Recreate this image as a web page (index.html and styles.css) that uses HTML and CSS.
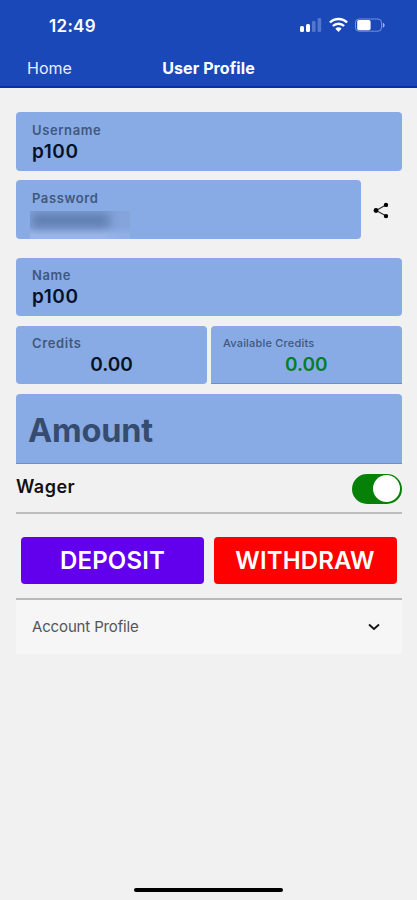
FILE: index.html
```
<!DOCTYPE html>
<html lang="en">
<head>
<meta charset="utf-8">
<title>User Profile</title>
<link rel="stylesheet" href="styles.css">
</head>
<body>
<div class="screen">
  <header class="header">
    <div class="status">
      <span class="clock">12:49</span>
      <svg class="status-icons" width="88" height="18" viewBox="0 0 88 18" fill="#fff">
        <rect x="0" y="10" width="4" height="6" rx="1.5"/>
        <rect x="6" y="8" width="4" height="8" rx="1.5"/>
        <rect x="12" y="5" width="3.6" height="11" rx="1.3" opacity=".25"/>
        <rect x="17.6" y="2" width="3.6" height="14" rx="1.3" opacity=".25"/>
        <g fill="none" stroke="#fff" stroke-width="2.4">
          <path d="M29.9 6.5a12.2 12.2 0 0 1 17.2 0"/>
          <path d="M32.9 10a8 8 0 0 1 11.2 0"/>
        </g>
        <path d="M35.4 12.7a4.5 4.5 0 0 1 6.2 0L38.5 15.9z"/>
        <rect x="55.5" y="3" width="26" height="12.2" rx="3.5" fill="none" stroke="#fff" stroke-opacity=".4"/>
        <rect x="57.2" y="4" width="13.4" height="10.2" rx="1.8"/>
        <path d="M82.8 6.7c2.4 1 2.4 4 0 5z" opacity=".6"/>
      </svg>
    </div>
    <nav class="nav">
      <a class="home">Home</a>
      <h1 class="title">User Profile</h1>
    </nav>
  </header>

  <main class="content">
    <div class="field">
      <label class="label">Username</label>
      <span class="value">p100</span>
    </div>
    <div class="row password-row">
      <div class="field">
        <label class="label">Password</label>
        <div class="masked"><i class="smudge"></i></div>
      </div>
      <svg class="share" width="18" height="20" viewBox="0 0 18 20">
        <path d="M14.2 4.7L4.2 10.5l10 5.6" fill="none" stroke="#333" stroke-width="1.2"/>
        <circle cx="14" cy="4.9" r="2.2"/><circle cx="4" cy="10.5" r="2.4"/><circle cx="14" cy="16.1" r="2.2"/>
      </svg>
    </div>
    <div class="field name-field">
      <label class="label">Name</label>
      <span class="value">p100</span>
    </div>
    <div class="row">
      <div class="field half">
        <label class="label">Credits</label>
        <span class="value number">0.00</span>
      </div>
      <div class="field half available">
        <label class="label">Available Credits</label>
        <span class="value number">0.00</span>
      </div>
    </div>
    <div class="amount">Amount</div>
    <div class="wager">
      <span class="wager-label">Wager</span>
      <span class="toggle"><i class="knob"></i></span>
    </div>
    <div class="actions">
      <button class="button deposit">DEPOSIT</button>
      <button class="button withdraw">WITHDRAW</button>
    </div>
    <div class="panel">
      <span class="panel-title">Account Profile</span>
      <svg width="14" height="10" viewBox="0 0 14 10"><path d="M2 2.5L7 7l5-4.5" fill="none" stroke="#111" stroke-width="1.8"/></svg>
    </div>
  </main>
  <div class="home-indicator"></div>
</div>
</body>
</html>
```
FILE: styles.css
```
* { box-sizing: border-box; }
body { margin: 0; font-family: Inter, "Liberation Sans", sans-serif; background: #f1f1f1; }
.screen { width: 417px; height: 900px; display: flex; flex-direction: column; background: #f1f1f1; overflow: hidden; }
.header { height: 88px; background: #1b48b9; border-bottom: 2px solid #0731ae; color: #fff; flex: none; }
.status { height: 50px; padding: 16px 29px 0 49px; display: flex; justify-content: space-between; align-items: flex-start; }
.clock { font-size: 17px; line-height: 20px; font-weight: 600; letter-spacing: .3px; }
.status-icons { display: block; }
.nav { height: 36px; display: grid; grid-template-columns: 1fr auto 1fr; align-items: center; padding: 0 27px; }
.home { font-size: 16px; line-height: 20px; color: #e9edff; }
.title { margin: 0; font-size: 16px; line-height: 20px; font-weight: 700; letter-spacing: .1px; }
.content { flex: 1; padding: 24.4px 15.5px 0 16px; }
.field { height: 58.5px; border-radius: 4px; background: #89abe5; padding: 9.5px 16px 0; display: flex; flex-direction: column; }
.label { font-size: 13px; line-height: 17px; font-weight: 600; color: #3f587f; letter-spacing: .6px; }
.value { font-size: 19px; line-height: 26px; font-weight: 600; color: #071126; letter-spacing: .55px; }
.number { text-align: center; letter-spacing: 0; }
.row { display: flex; gap: 4px; margin-top: 9.5px; }
.password-row { align-items: center; gap: 11px; }
.password-row .field { width: 345px; }
.share { display: block; }
.masked { width: 100px; height: 28px; margin: 4px 0 0 -2px; background: linear-gradient(to bottom, #7f9dd2 0, #7f9dd2 55%, #98b6ec 85%); overflow: hidden; -webkit-mask-image: linear-gradient(to right, #000 70%, rgba(0,0,0,.5) 90%); }
.smudge { display: block; width: 78px; height: 13px; margin: 3px 0 0 3px; background: #5f7eb1; filter: blur(4px); }
.name-field { margin-top: 19px; }
.half { flex: none; width: 191px; }
.available { width: 190.5px; height: 58px; border-bottom: 1.5px solid #6f8dc6; border-radius: 4px 4px 0 0; padding-left: 12px; padding-right: 12px; }
.available .label { font-size: 11px; font-weight: 500; letter-spacing: .2px; }
.available .number { color: #087d27; }
.amount { margin-top: 9.5px; height: 70.5px; border-radius: 4px 4px 0 0; border-bottom: 1.5px solid #718fc8; background: #89abe5; padding: 4px 12px 0; font-size: 32.5px; line-height: 66px; font-weight: 700; letter-spacing: -.2px; color: #354b70; }
.wager { height: 49.5px; border-bottom: 2px solid #bdbdbd; display: flex; justify-content: space-between; padding-top: 9.5px; }
.wager-label { font-size: 18px; line-height: 25px; font-weight: 600; color: #111; letter-spacing: .5px; }
.toggle { width: 50px; height: 30px; border-radius: 15px; background: #078008; padding: 1.5px; display: flex; justify-content: flex-end; }
.knob { width: 27px; height: 27px; border-radius: 50%; background: #fff; }
.actions { display: flex; gap: 9.5px; padding: 23px 5px 14px; border-bottom: 2px solid #b9b9b9; }
.button { flex: 1 1 0; height: 47px; border: 0; border-radius: 4px; padding: 1px 0 0; color: #fff; font: 600 24px/46px Inter, "Liberation Sans", sans-serif; letter-spacing: .15px; }
.deposit { background: #6200ee; }
.withdraw { background: #f00; }
.panel { height: 54px; background: #f6f6f6; padding: 0 20.5px 0 16px; display: flex; justify-content: space-between; align-items: center; }
.panel-title { font-size: 15px; color: #555; letter-spacing: -.15px; }
.home-indicator { width: 149px; height: 4px; border-radius: 2px; background: #000; margin: 0 auto 8px; flex: none; }
```
